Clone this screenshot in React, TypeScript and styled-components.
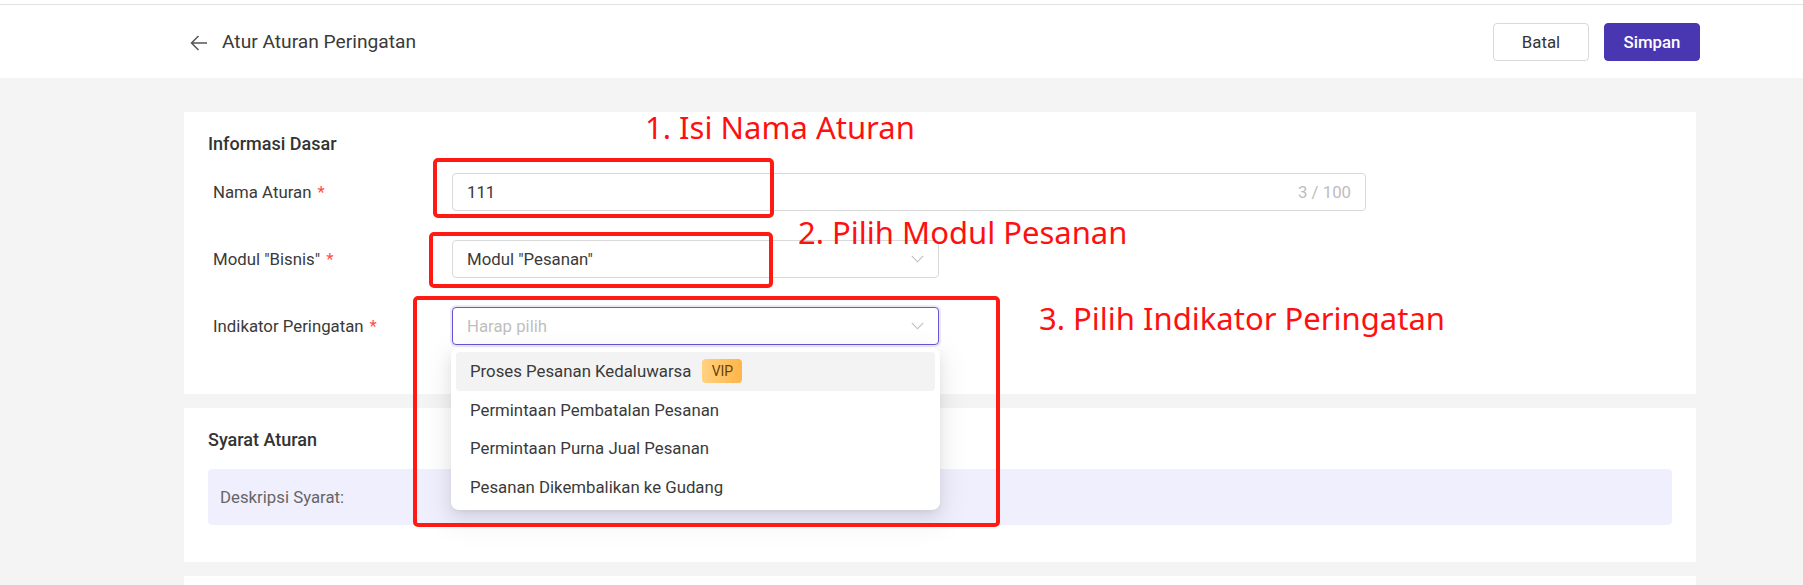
import React from "react";
import styled, { createGlobalStyle } from "styled-components";

const GlobalStyle = createGlobalStyle`
  html, body { margin: 0; padding: 0; }
  body {
    font-family: Roboto, "Noto Sans", "Liberation Sans", Arial, sans-serif;
    background: #f4f4f4;
    color: #333;
  }
  * { box-sizing: border-box; }
`;

const Page = styled.div`
  position: relative;
  height: 585px;
  background: #f4f4f4;
  overflow: hidden;
`;

const TopStrip = styled.div`
  height: 5px;
  background: #fff;
  border-bottom: 1px solid #e2e2e2;
`;

const Header = styled.header`
  height: 73px;
  background: #fff;
  display: flex;
  align-items: center;
  justify-content: space-between;
  padding: 0 103px 0 190px;
`;

const TitleGroup = styled.div`
  display: flex;
  align-items: center;
  gap: 14px;
`;

const Title = styled.h1`
  margin: 0;
  font-size: 19.2px;
  font-weight: 400;
  color: #3a3a3a;
  line-height: 24px;
`;

const BackIcon = styled.svg`
  display: block;
  margin-top: 2px;
`;

const Actions = styled.div`
  display: flex;
  gap: 15px;
`;

const Button = styled.button<{ $primary?: boolean }>`
  width: 96px;
  height: 38px;
  border-radius: 4px;
  font-family: inherit;
  font-size: 16.8px;
  font-weight: ${(p) => (p.$primary ? 500 : 400)};
  cursor: pointer;
  border: 1px solid ${(p) => (p.$primary ? "#4937b1" : "#d9d9d9")};
  background: ${(p) => (p.$primary ? "#4937b1" : "#fff")};
  color: ${(p) => (p.$primary ? "#fff" : "#333")};
`;

const Main = styled.main`
  padding: 34px 107px 0 184px;
  display: flex;
  flex-direction: column;
  gap: 14px;
`;

const Card = styled.section<{ $pb?: number }>`
  background: #fff;
  padding: 20px 24px ${(p) => p.$pb ?? 20}px;
  min-height: 40px;
`;

const CardTitle = styled.h2`
  margin: 0 0 17px;
  font-size: 18px;
  font-weight: 500;
  line-height: 24px;
  color: #333;
`;

const Rows = styled.div`
  display: flex;
  flex-direction: column;
  gap: 29px;
`;

const Row = styled.div`
  display: grid;
  grid-template-columns: 244px auto;
  align-items: center;
`;

const Label = styled.label`
  padding-left: 5px;
  font-size: 16.8px;
  color: #3a3a3a;
`;

const Required = styled.span`
  color: #ff4d4f;
  margin-left: 6px;
`;

const Field = styled.div<{ $w: number; $focus?: boolean }>`
  position: relative;
  width: ${(p) => p.$w}px;
  height: 38px;
  border: 1px solid ${(p) => (p.$focus ? "#6656d0" : "#d9d9d9")};
  box-shadow: ${(p) => (p.$focus ? "0 0 0 2px rgba(102, 86, 208, 0.12)" : "none")};
  border-radius: 4px;
  background: #fff;
  display: flex;
  align-items: center;
  justify-content: space-between;
  padding: 0 14px;
  font-size: 16.8px;
`;

const Value = styled.span<{ $placeholder?: boolean }>`
  color: ${(p) => (p.$placeholder ? "#bfbfbf" : "#3a3a3a")};
`;

const Counter = styled.span`
  color: #bdbdbd;
  font-size: 16.8px;
`;

const Chevron = () => (
  <svg width="13" height="8" viewBox="0 0 13 8" fill="none">
    <polyline points="0.8,0.8 6.5,6.8 12.2,0.8" stroke="#bdbdbd" strokeWidth="1.1" />
  </svg>
);

const Dropdown = styled.ul`
  position: absolute;
  top: calc(100% + 4px);
  left: -2px;
  width: 489px;
  margin: 0;
  padding: 4px 5px 4px;
  list-style: none;
  background: #fff;
  border-radius: 8px;
  box-shadow: 0 6px 16px 0 rgba(0, 0, 0, 0.08), 0 3px 6px -4px rgba(0, 0, 0, 0.12),
    0 9px 28px 8px rgba(0, 0, 0, 0.05);
  z-index: 5;
`;

const Option = styled.li<{ $active?: boolean }>`
  height: 38.5px;
  display: flex;
  align-items: center;
  padding: 0 14px;
  border-radius: 4px;
  font-size: 16.8px;
  color: #3a3a3a;
  background: ${(p) => (p.$active ? "#f3f3f3" : "transparent")};
`;

const Vip = styled.span`
  margin-left: 11px;
  width: 40px;
  height: 24px;
  border-radius: 4px;
  display: inline-flex;
  align-items: center;
  justify-content: center;
  font-size: 14px;
  color: #6a4300;
  background: linear-gradient(90deg, #ffd282, #ffb548);
`;

const DescBox = styled.div`
  height: 56px;
  border-radius: 4px;
  background: #f0effd;
  display: flex;
  align-items: center;
  padding: 0 12px;
  font-size: 16.8px;
  color: #666;
`;

const Mark = styled.div<{ $x: number; $y: number; $w: number; $h: number }>`
  position: absolute;
  left: ${(p) => p.$x}px;
  top: ${(p) => p.$y}px;
  width: ${(p) => p.$w}px;
  height: ${(p) => p.$h}px;
  border: 4px solid #ff1a14;
  border-radius: 5px;
  pointer-events: none;
  z-index: 10;
`;

const Note = styled.div<{ $x: number; $y: number }>`
  position: absolute;
  left: ${(p) => p.$x}px;
  top: ${(p) => p.$y}px;
  font-family: "Noto Sans", "Open Sans", sans-serif;
  font-size: 31px;
  line-height: 31px;
  color: #ff1010;
  white-space: nowrap;
  pointer-events: none;
  z-index: 10;
`;

const options = [
  "Proses Pesanan Kedaluwarsa",
  "Permintaan Pembatalan Pesanan",
  "Permintaan Purna Jual Pesanan",
  "Pesanan Dikembalikan ke Gudang",
];

export default function App() {
  return (
    <Page>
      <GlobalStyle />
      <TopStrip />
      <Header>
        <TitleGroup>
          <BackIcon width="18" height="16" viewBox="0 0 18 16" fill="none">
            <path d="M17 8H1.5M8.5 1L1.5 8l7 7" stroke="#555" strokeWidth="1.5" />
          </BackIcon>
          <Title>Atur Aturan Peringatan</Title>
        </TitleGroup>
        <Actions>
          <Button>Batal</Button>
          <Button $primary>Simpan</Button>
        </Actions>
      </Header>
      <Main>
        <Card $pb={49}>
          <CardTitle>Informasi Dasar</CardTitle>
          <Rows>
            <Row>
              <Label>
                Nama Aturan<Required>*</Required>
              </Label>
              <Field $w={914}>
                <Value>111</Value>
                <Counter>3 / 100</Counter>
              </Field>
            </Row>
            <Row>
              <Label>
                Modul "Bisnis"<Required>*</Required>
              </Label>
              <Field $w={487}>
                <Value>Modul "Pesanan"</Value>
                <Chevron />
              </Field>
            </Row>
            <Row>
              <Label>
                Indikator Peringatan<Required>*</Required>
              </Label>
              <Field $w={487} $focus>
                <Value $placeholder>Harap pilih</Value>
                <Chevron />
                <Dropdown>
                  {options.map((o, i) => (
                    <Option key={o} $active={i === 0}>
                      {o}
                      {i === 0 && <Vip>VIP</Vip>}
                    </Option>
                  ))}
                </Dropdown>
              </Field>
            </Row>
          </Rows>
        </Card>
        <Card $pb={37}>
          <CardTitle>Syarat Aturan</CardTitle>
          <DescBox>Deskripsi Syarat:</DescBox>
        </Card>
        <Card />
      </Main>

      <Mark $x={433} $y={158} $w={341} $h={60} />
      <Mark $x={429} $y={232} $w={344} $h={56} />
      <Mark $x={413} $y={296} $w={587} $h={231} />
      <Note $x={645} $y={112}>1. Isi Nama Aturan</Note>
      <Note $x={798} $y={217}>2. Pilih Modul Pesanan</Note>
      <Note $x={1039} $y={303}>3. Pilih Indikator Peringatan</Note>
    </Page>
  );
}
